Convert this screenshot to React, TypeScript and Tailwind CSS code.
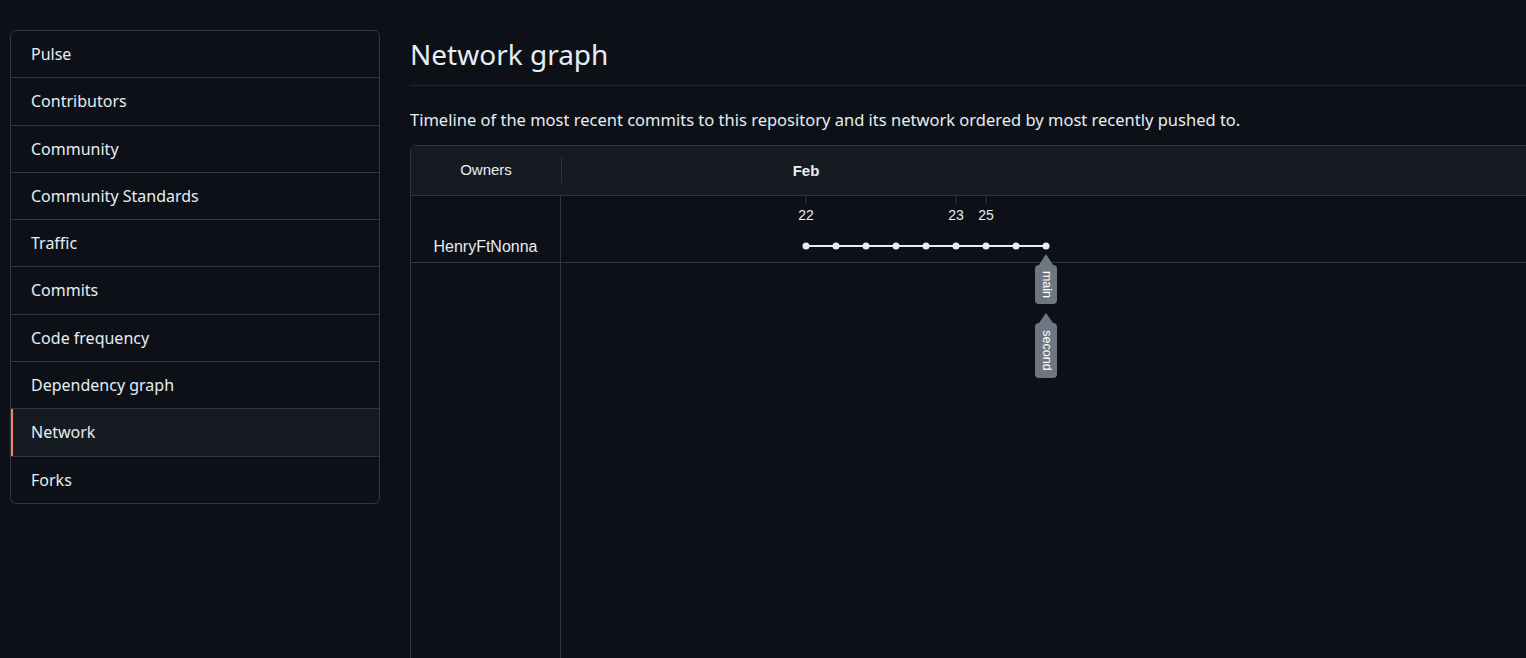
import React from "react";

const items = [
  "Pulse",
  "Contributors",
  "Community",
  "Community Standards",
  "Traffic",
  "Commits",
  "Code frequency",
  "Dependency graph",
  "Network",
  "Forks",
];

function Chart() {
  const dots = Array.from({ length: 9 }, (_, i) => 245 + i * 30);
  const ticks = [
    { x: 245, l: "22" },
    { x: 395, l: "23" },
    { x: 425, l: "25" },
  ];
  const badge = (top: number, bottom: number, tip: number) => {
    const l = 474;
    const r = 496;
    const rr = 4;
    return `M485 ${tip} L492 ${top} L${r - rr} ${top} Q${r} ${top} ${r} ${top + rr} L${r} ${bottom - rr} Q${r} ${bottom} ${r - rr} ${bottom} L${l + rr} ${bottom} Q${l} ${bottom} ${l} ${bottom - rr} L${l} ${top + rr} Q${l} ${top} ${l + rr} ${top} L478 ${top} Z`;
  };
  return (
    <svg width="900" height="66" className="block" style={{ overflow: "visible" }}>
      <g transform="translate(0 1)">
        {ticks.map((t) => (
          <g key={t.l}>
            <line x1={t.x} y1={-1} x2={t.x} y2={7} stroke="#30363d" strokeWidth={1} />
            <text
              x={t.x}
              y={23}
              textAnchor="middle"
              fontFamily="'Liberation Sans', Arial, sans-serif"
              fontSize={14}
              fill="#e6edf3"
            >
              {t.l}
            </text>
          </g>
        ))}
        <line x1={245} y1={49} x2={485} y2={49} stroke="#e6edf3" strokeWidth={2} />
        {dots.map((x) => (
          <circle key={x} cx={x} cy={49} r={3.5} fill="#e6edf3" />
        ))}
        <path d={badge(68, 107, 57)} fill="#6e7681" />
        <text
          x={0}
          y={0}
          transform="translate(485.5 87.5) rotate(90)"
          textAnchor="middle"
          dominantBaseline="central"
          fontFamily="'Liberation Sans', Arial, sans-serif"
          fontSize={12.5}
          fill="#ffffff"
        >
          main
        </text>
        <path d={badge(126, 181, 116)} fill="#6e7681" />
        <text
          x={0}
          y={0}
          transform="translate(485.5 153.5) rotate(90)"
          textAnchor="middle"
          dominantBaseline="central"
          fontFamily="'Liberation Sans', Arial, sans-serif"
          fontSize={12.5}
          fill="#ffffff"
        >
          second
        </text>
      </g>
    </svg>
  );
}

export default function App() {
  return (
    <div
      className="h-screen w-screen overflow-hidden bg-[#0d1117] text-[#e6edf3]"
      style={{ fontFamily: "'Noto Sans', sans-serif" }}
    >
      <div className="flex items-start gap-[30px] pl-[10px] pt-[30px]">
        <nav className="w-[370px] shrink-0 overflow-hidden rounded-md border border-[#30363d]">
          {items.map((it, i) => (
            <div
              key={it}
              className={
                "py-3 pl-5 text-base leading-[22.3px] " +
                (i > 0 ? "border-t border-[#30363d] " : "") +
                (it === "Network" ? "bg-[#161b22] shadow-[inset_2px_0_0_#f78166]" : "")
              }
            >
              {it}
            </div>
          ))}
        </nav>
        <main className="w-[1300px] shrink-0">
          <div className="border-b border-[#21262d] pb-[7px]">
            <h1 className="text-[28px] font-normal leading-[48px]">Network graph</h1>
          </div>
          <p className="mt-[22px] text-[16.5px] leading-6">
            Timeline of the most recent commits to this repository and its network ordered by most recently pushed to.
          </p>
          <div
            className="mt-[13px] h-[600px] rounded-tl-md border-l border-t border-[#30363d] flex flex-col"
            style={{ fontFamily: "'Liberation Sans', Arial, sans-serif" }}
          >
            <div className="flex h-[50px] shrink-0 border-b border-[#30363d] bg-[#161b22]">
              <div className="relative flex w-[150px] shrink-0 items-center justify-center text-[15px] text-[#e6edf3]">
                Owners
                <span className="absolute right-[-1px] top-[12px] h-[25px] w-px bg-[#30363d]" />
              </div>
              <div className="relative flex-1">
                <span className="absolute left-[245px] top-[16px] -translate-x-1/2 text-[15px] font-bold leading-[18px]">
                  Feb
                </span>
              </div>
            </div>
            <div className="flex h-[67px] shrink-0 border-b border-[#30363d]">
              <div className="flex w-[150px] shrink-0 items-end justify-center border-r border-[#30363d] pb-[3px] text-base">
                HenryFtNonna
              </div>
              <div className="flex-1">
                <Chart />
              </div>
            </div>
            <div className="flex flex-1">
              <div className="w-[150px] shrink-0 border-r border-[#30363d]" />
              <div className="flex-1" />
            </div>
          </div>
        </main>
      </div>
    </div>
  );
}
